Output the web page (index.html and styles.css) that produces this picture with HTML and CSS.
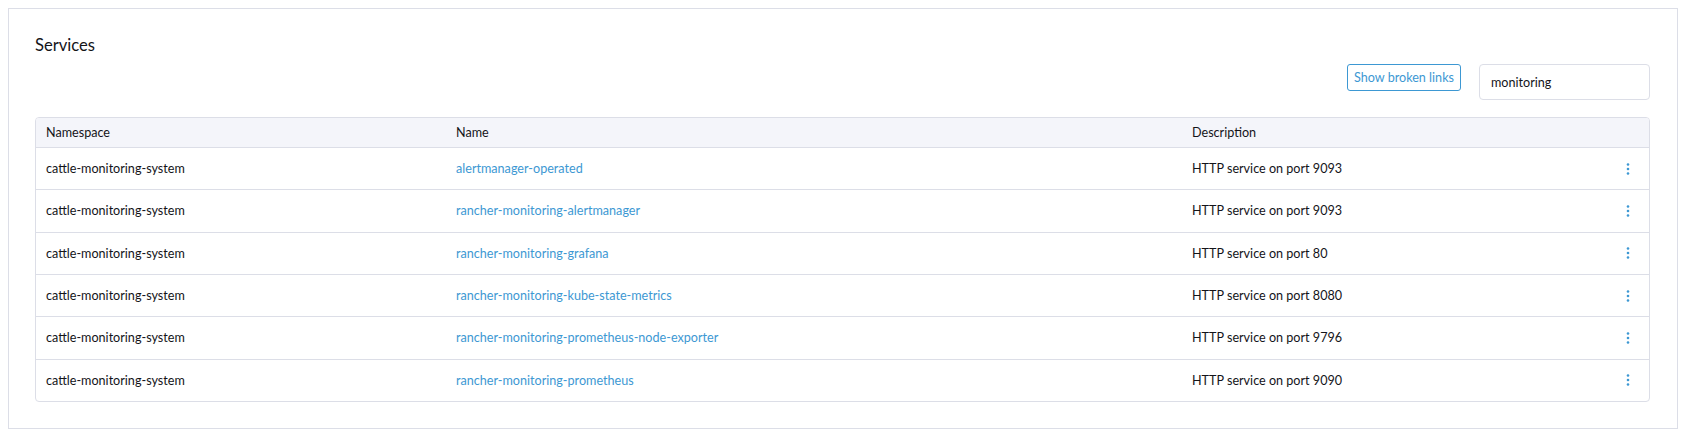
FILE: index.html
```html
<!DOCTYPE html>
<html>
<head>
<meta charset="utf-8">
<link rel="stylesheet" href="styles.css">
</head>
<body>
<div class="card">
  <h2 class="title">Services</h2>
  <div class="toolbar">
    <button class="btn-outline">Show broken links</button>
    <input class="search" type="text" value="monitoring">
  </div>
  <div class="table">
    <div class="row head">
      <div class="c ns">Namespace</div>
      <div class="c name">Name</div>
      <div class="c desc">Description</div>
      <div class="c act"></div>
    </div>
    <div class="row">
      <div class="c ns">cattle-monitoring-system</div>
      <div class="c name"><a href="#">alertmanager-operated</a></div>
      <div class="c desc">HTTP service on port 9093</div>
      <div class="c act"><svg class="kebab" width="4" height="14" viewBox="0 0 4 14"><circle cx="2" cy="2.5" r="1.3"/><circle cx="2" cy="7" r="1.3"/><circle cx="2" cy="11.5" r="1.3"/></svg></div>
    </div>
    <div class="row">
      <div class="c ns">cattle-monitoring-system</div>
      <div class="c name"><a href="#">rancher-monitoring-alertmanager</a></div>
      <div class="c desc">HTTP service on port 9093</div>
      <div class="c act"><svg class="kebab" width="4" height="14" viewBox="0 0 4 14"><circle cx="2" cy="2.5" r="1.3"/><circle cx="2" cy="7" r="1.3"/><circle cx="2" cy="11.5" r="1.3"/></svg></div>
    </div>
    <div class="row">
      <div class="c ns">cattle-monitoring-system</div>
      <div class="c name"><a href="#">rancher-monitoring-grafana</a></div>
      <div class="c desc">HTTP service on port 80</div>
      <div class="c act"><svg class="kebab" width="4" height="14" viewBox="0 0 4 14"><circle cx="2" cy="2.5" r="1.3"/><circle cx="2" cy="7" r="1.3"/><circle cx="2" cy="11.5" r="1.3"/></svg></div>
    </div>
    <div class="row">
      <div class="c ns">cattle-monitoring-system</div>
      <div class="c name"><a href="#">rancher-monitoring-kube-state-metrics</a></div>
      <div class="c desc">HTTP service on port 8080</div>
      <div class="c act"><svg class="kebab" width="4" height="14" viewBox="0 0 4 14"><circle cx="2" cy="2.5" r="1.3"/><circle cx="2" cy="7" r="1.3"/><circle cx="2" cy="11.5" r="1.3"/></svg></div>
    </div>
    <div class="row">
      <div class="c ns">cattle-monitoring-system</div>
      <div class="c name"><a href="#">rancher-monitoring-prometheus-node-exporter</a></div>
      <div class="c desc">HTTP service on port 9796</div>
      <div class="c act"><svg class="kebab" width="4" height="14" viewBox="0 0 4 14"><circle cx="2" cy="2.5" r="1.3"/><circle cx="2" cy="7" r="1.3"/><circle cx="2" cy="11.5" r="1.3"/></svg></div>
    </div>
    <div class="row">
      <div class="c ns">cattle-monitoring-system</div>
      <div class="c name"><a href="#">rancher-monitoring-prometheus</a></div>
      <div class="c desc">HTTP service on port 9090</div>
      <div class="c act"><svg class="kebab" width="4" height="14" viewBox="0 0 4 14"><circle cx="2" cy="2.5" r="1.3"/><circle cx="2" cy="7" r="1.3"/><circle cx="2" cy="11.5" r="1.3"/></svg></div>
    </div>
  </div>
</div>
</body>
</html>
```

FILE: styles.css
```css
* { box-sizing: border-box; }
body {
  margin: 8px;
  background: #fff;
  font-family: Lato, "Noto Sans", sans-serif;
  color: #141419;
  font-size: 12.6px;
}
.card {
  border: 1px solid #dcdee7;
  height: 421px;
  padding: 26px 27px 0 26px;
}
.title {
  margin: 0;
  font-size: 16.6px;
  font-weight: 400;
  line-height: 20px;
}
.toolbar {
  display: flex;
  justify-content: flex-end;
  align-items: flex-start;
  gap: 18px;
  margin-top: 9px;
}
.btn-outline {
  height: 27px;
  width: 114px;
  padding: 0;
  border: 1px solid #3d98d3;
  border-radius: 3px;
  background: #fff;
  color: #3d98d3;
  font-family: inherit;
  font-size: 12.6px;
  line-height: 25px;
}
.search {
  width: 171px;
  height: 36px;
  border: 1px solid #dcdee7;
  border-radius: 4px;
  padding: 0 11px;
  font-family: inherit;
  font-size: 12.6px;
  color: #141419;
  outline: none;
}
.table {
  margin-top: 17px;
  border: 1px solid #dcdee7;
  border-radius: 4px;
  overflow: hidden;
}
.row {
  display: grid;
  grid-template-columns: 410px 736px 1fr 50px;
  height: 42.33px;
  align-items: center;
  border-top: 1px solid #dcdee7;
}
.row.head {
  height: 29px;
  border-top: none;
  background: #f4f5fa;
}
.c { padding-left: 10px; white-space: nowrap; }
.c a { color: #3d98d3; text-decoration: none; }
.act { display: flex; justify-content: flex-start; padding-left: 27px; }
.kebab { fill: #3d98d3; display: block; }
```
